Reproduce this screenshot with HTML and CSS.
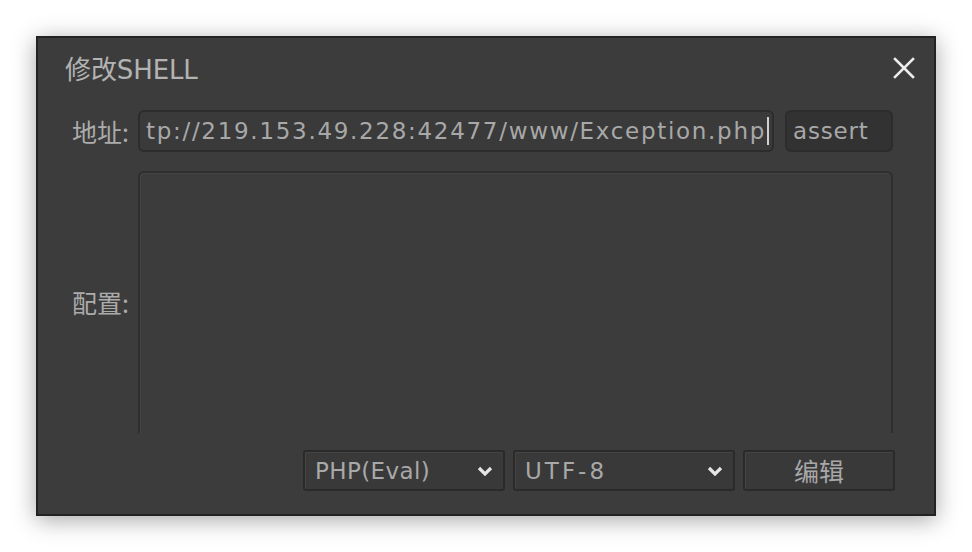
FILE: index.html
```html
<!DOCTYPE html>
<html lang="zh">
<head>
<meta charset="utf-8">
<title>修改SHELL</title>
<link rel="stylesheet" href="styles.css">
</head>
<body>
<div class="dialog">
  <div class="header">
    <div class="title">修改SHELL</div>
    <div class="close" aria-label="close">
      <svg width="22" height="22" viewBox="0 0 22 22"><path d="M2 2 L20 20 M20 2 L2 20" stroke="#ececec" stroke-width="2.6" stroke-linecap="square"/></svg>
    </div>
  </div>
  <div class="form">
    <div class="label">地址:</div>
    <div class="addr-row">
      <div class="input url"><span class="url-text">tp://219.153.49.228:42477/www/Exception.php</span><span class="caret"></span></div>
      <div class="input pass">assert</div>
    </div>
    <div class="label cfg-label">配置:</div>
    <div class="cfg-wrap"><div class="textarea"></div></div>
  </div>
  <div class="footer">
    <div class="select sel-type"><span>PHP(Eval)</span><svg class="chev" width="18" height="12" viewBox="0 0 18 12"><path d="M3 3 L9 9 L15 3" fill="none" stroke="#e6e6e6" stroke-width="3.2"/></svg></div>
    <div class="select sel-enc"><span class="enc-text">UTF-8</span><svg class="chev" width="18" height="12" viewBox="0 0 18 12"><path d="M3 3 L9 9 L15 3" fill="none" stroke="#e6e6e6" stroke-width="3.2"/></svg></div>
    <div class="button">编辑</div>
  </div>
</div>
</body>
</html>
```

FILE: styles.css
```css
html, body {
  margin: 0;
  padding: 0;
  background: #ffffff;
}
body {
  width: 972px;
  height: 552px;
  overflow: hidden;
  font-family: "DejaVu Sans", "Noto Sans CJK SC", sans-serif;
}
.dialog {
  margin: 36px 0 0 36px;
  width: 900px;
  height: 480px;
  box-sizing: border-box;
  border: 2px solid #232323;
  background: #3c3c3c;
  box-shadow: 0 4px 22px rgba(0, 0, 0, 0.35);
  display: flex;
  flex-direction: column;
}
.header {
  height: 72px;
  display: flex;
  align-items: center;
  justify-content: space-between;
  padding: 0 19px 0 27px;
  box-sizing: border-box;
}
.title {
  font-size: 26px;
  color: #b3b3b3;
  letter-spacing: -0.1px;
  margin-top: -13px;
}
.close {
  width: 22px;
  height: 22px;
  margin-top: -12px;
}
.close svg { display: block; }
.form {
  display: grid;
  grid-template-columns: 100px 1fr;
  grid-template-rows: 42px 262px;
  row-gap: 19px;
  padding-right: 42px;
}
.label {
  font-family: "Noto Sans CJK SC", sans-serif;
  font-size: 25px;
  color: #ababab;
  text-align: right;
  padding-right: 9px;
  display: flex;
  align-items: center;
  justify-content: flex-end;
  line-height: 1;
}
.addr-row {
  display: flex;
  gap: 11px;
}
.input {
  box-sizing: border-box;
  height: 42px;
  border: 2px solid #2c2c2c;
  border-radius: 6px;
  font-size: 23px;
  color: #a8a8a8;
  display: flex;
  align-items: center;
  white-space: nowrap;
  overflow: hidden;
}
.url {
  width: 636px;
  background: #3a3a3a;
  padding-left: 6px;
}
.url-text {
  letter-spacing: 1.7px;
}
.caret {
  display: inline-block;
  width: 1.5px;
  height: 28px;
  background: #d0d0d0;
  margin-left: 1px;
}
.pass {
  width: 108px;
  background: #323232;
  padding-left: 6px;
  letter-spacing: 0.8px;
}
.cfg-wrap {
  height: 262px;
  overflow: hidden;
}
.textarea {
  box-sizing: border-box;
  width: 755px;
  height: 280px;
  border: 2px solid #2e2e2e;
  border-radius: 6px;
  background: #3c3c3c;
  box-shadow: inset 1px 1px 0 #454545;
}
.footer {
  display: flex;
  justify-content: flex-end;
  gap: 8px;
  padding: 17px 39px 0 0;
}
.select, .button {
  box-sizing: border-box;
  height: 41px;
  border: 2px solid #2a2a2a;
  border-radius: 3px;
  background: #393939;
  box-shadow: inset 1px 1px 0 #444444;
  font-size: 23px;
  color: #a8a8a8;
  display: flex;
  align-items: center;
}
.select {
  justify-content: space-between;
  padding: 0 9px 0 10px;
  letter-spacing: 0.4px;
}
.enc-text {
  letter-spacing: 3px;
}
.sel-type { width: 202px; }
.sel-enc { width: 222px; }
.chev { display: block; }
.button {
  width: 152px;
  justify-content: center;
  font-family: "Noto Sans CJK SC", sans-serif;
  font-size: 25px;
  padding-bottom: 2px;
}
```
